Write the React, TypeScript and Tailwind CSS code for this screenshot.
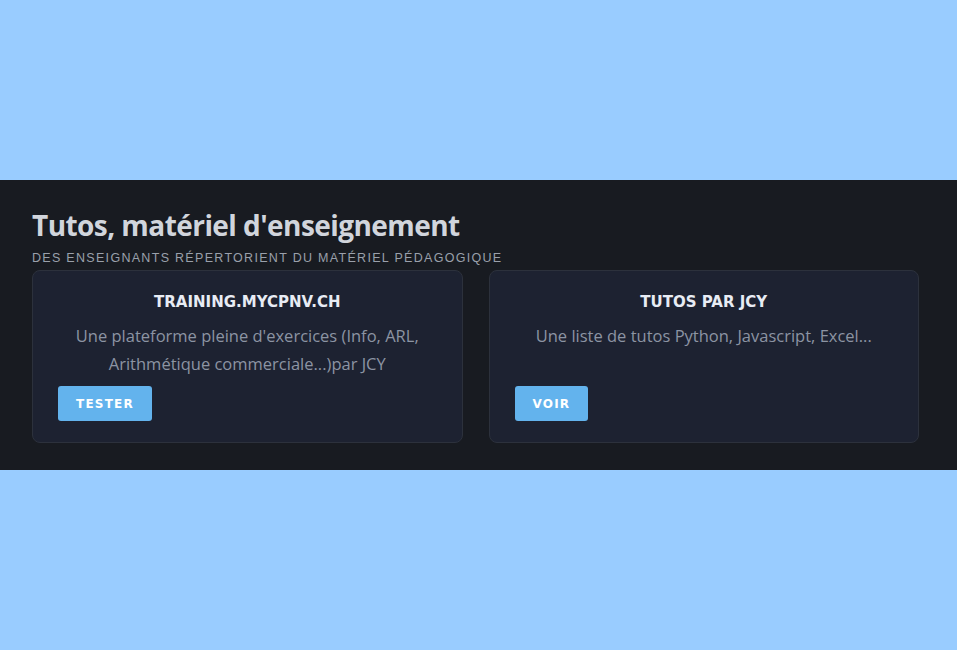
const cards = [
  {
    title: "TRAINING.MYCPNV.CH",
    text: "Une plateforme pleine d'exercices (Info, ARL, Arithmétique commerciale...)par JCY",
    action: "TESTER",
  },
  {
    title: "TUTOS PAR JCY",
    text: "Une liste de tutos Python, Javascript, Excel...",
    action: "VOIR",
  },
];

export default function App() {
  return (
    <div className="min-h-screen bg-[#99ccff] flex items-center">
      <section className="w-full bg-[#181b21] pl-8 pr-[38px] pt-[28px] pb-[27px]">
        <h2 className="font-['Open_Sans',sans-serif] font-bold text-[28px] leading-[34px] tracking-[-0.02em] text-[#d1d5dc]">
          Tutos, matériel d'enseignement
        </h2>
        <p className="mt-[9px] font-['Liberation_Sans',sans-serif] text-[12.5px] leading-[14px] uppercase tracking-[1.3px] text-[#9aa0ab]">
          Des enseignants répertorient du matériel pédagogique
        </p>

        <div className="mt-[5px] grid grid-cols-2 gap-[26px]">
          {cards.map((card) => (
            <div
              key={card.title}
              className="flex flex-col rounded-lg border border-[#2c313c] bg-[#1d2231] px-[25px] pt-[21px] pb-[21px]"
            >
              <h3 className="text-center font-['DejaVu_Sans',sans-serif] font-bold text-[15px] leading-[20px] text-[#e8ecf4]">
                {card.title}
              </h3>
              <p className="mt-[10px] flex-1 text-center font-['Open_Sans',sans-serif] text-[16.5px] leading-[28px] text-[#8c94a3]">
                {card.text}
              </p>
              <button className="mt-2 self-start h-[35px] rounded-[3px] bg-[#63b3ed] px-[18px] font-['DejaVu_Sans',sans-serif] font-bold text-[12px] tracking-[0.1em] text-white">
                {card.action}
              </button>
            </div>
          ))}
        </div>
      </section>
    </div>
  );
}
